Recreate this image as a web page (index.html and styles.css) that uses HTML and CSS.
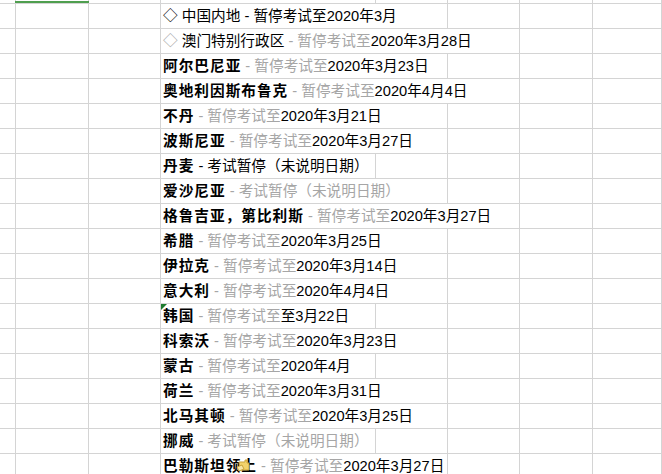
FILE: index.html
```html
<!DOCTYPE html>
<html lang="zh">
<head>
<meta charset="utf-8">
<link rel="stylesheet" href="styles.css">
</head>
<body>
<div class="sheet">
  <div class="row top">
    <div class="c"></div><div class="c"><div class="sel"></div></div><div class="c"></div><div class="c"></div><div class="c"></div><div class="c"></div><div class="c"></div><div class="c"></div>
  </div>
  <div class="row"><div class="c"></div><div class="c"></div><div class="c"></div><div class="c t"><span class="txt">◇ 中国内地 - 暂停考试至2020年3月</span></div><div class="c"></div><div class="c"></div><div class="c"></div><div class="c"></div></div>
  <div class="row"><div class="c"></div><div class="c"></div><div class="c"></div><div class="c t"><span class="txt"><span class="g">◇ </span>澳门特别行政区<span class="g"> - 暂停考试至</span>2020年3月28日</span></div><div class="c"></div><div class="c"></div><div class="c"></div><div class="c"></div></div>
  <div class="row"><div class="c"></div><div class="c"></div><div class="c"></div><div class="c t"><span class="txt"><b>阿尔巴尼亚</b><span class="g"> - 暂停考试至</span>2020年3月23日</span></div><div class="c"></div><div class="c"></div><div class="c"></div><div class="c"></div></div>
  <div class="row"><div class="c"></div><div class="c"></div><div class="c"></div><div class="c t"><span class="txt"><b>奥地利因斯布鲁克</b><span class="g"> - 暂停考试至</span>2020年4月4日</span></div><div class="c"></div><div class="c"></div><div class="c"></div><div class="c"></div></div>
  <div class="row"><div class="c"></div><div class="c"></div><div class="c"></div><div class="c t"><span class="txt"><b>不丹</b><span class="g"> - 暂停考试至</span>2020年3月21日</span></div><div class="c"></div><div class="c"></div><div class="c"></div><div class="c"></div></div>
  <div class="row"><div class="c"></div><div class="c"></div><div class="c"></div><div class="c t"><span class="txt"><b>波斯尼亚</b><span class="g"> - 暂停考试至</span>2020年3月27日</span></div><div class="c"></div><div class="c"></div><div class="c"></div><div class="c"></div></div>
  <div class="row"><div class="c"></div><div class="c"></div><div class="c"></div><div class="c t"><span class="txt"><b>丹麦</b> - 考试暂停（未说明日期）</span></div><div class="c"></div><div class="c"></div><div class="c"></div><div class="c"></div></div>
  <div class="row"><div class="c"></div><div class="c"></div><div class="c"></div><div class="c t"><span class="txt"><b>爱沙尼亚</b><span class="g"> - 考试暂停（未说明日期）</span></span></div><div class="c"></div><div class="c"></div><div class="c"></div><div class="c"></div></div>
  <div class="row"><div class="c"></div><div class="c"></div><div class="c"></div><div class="c t"><span class="txt"><b>格鲁吉亚，第比利斯</b><span class="g"> - 暂停考试至</span>2020年3月27日</span></div><div class="c"></div><div class="c"></div><div class="c"></div><div class="c"></div></div>
  <div class="row"><div class="c"></div><div class="c"></div><div class="c"></div><div class="c t"><span class="txt"><b>希腊</b><span class="g"> - 暂停考试至</span>2020年3月25日</span></div><div class="c"></div><div class="c"></div><div class="c"></div><div class="c"></div></div>
  <div class="row"><div class="c"></div><div class="c"></div><div class="c"></div><div class="c t"><span class="txt"><b>伊拉克</b><span class="g"> - 暂停考试至</span>2020年3月14日</span></div><div class="c"></div><div class="c"></div><div class="c"></div><div class="c"></div></div>
  <div class="row"><div class="c"></div><div class="c"></div><div class="c"></div><div class="c t"><span class="txt"><b>意大利</b><span class="g"> - 暂停考试至</span>2020年4月4日</span></div><div class="c"></div><div class="c"></div><div class="c"></div><div class="c"></div></div>
  <div class="row"><div class="c"></div><div class="c"></div><div class="c"></div><div class="c t flag"><span class="txt"><b>韩国</b><span class="g"> - 暂停考试至</span>至3月22日</span></div><div class="c"></div><div class="c"></div><div class="c"></div><div class="c"></div></div>
  <div class="row"><div class="c"></div><div class="c"></div><div class="c"></div><div class="c t"><span class="txt"><b>科索沃</b><span class="g"> - 暂停考试至</span>2020年3月23日</span></div><div class="c"></div><div class="c"></div><div class="c"></div><div class="c"></div></div>
  <div class="row"><div class="c"></div><div class="c"></div><div class="c"></div><div class="c t"><span class="txt"><b>蒙古</b><span class="g"> - 暂停考试至</span>2020年4月</span></div><div class="c"></div><div class="c"></div><div class="c"></div><div class="c"></div></div>
  <div class="row"><div class="c"></div><div class="c"></div><div class="c"></div><div class="c t"><span class="txt"><b>荷兰</b><span class="g"> - 暂停考试至</span>2020年3月31日</span></div><div class="c"></div><div class="c"></div><div class="c"></div><div class="c"></div></div>
  <div class="row"><div class="c"></div><div class="c"></div><div class="c"></div><div class="c t"><span class="txt"><b>北马其顿</b><span class="g"> - 暂停考试至</span>2020年3月25日</span></div><div class="c"></div><div class="c"></div><div class="c"></div><div class="c"></div></div>
  <div class="row"><div class="c"></div><div class="c"></div><div class="c"></div><div class="c t"><span class="txt"><b>挪威</b><span class="g"> - 考试暂停（未说明日期）</span></span></div><div class="c"></div><div class="c"></div><div class="c"></div><div class="c"></div></div>
  <div class="row"><div class="c"></div><div class="c"></div><div class="c"></div><div class="c t"><span class="txt"><b>巴勒斯坦领土</b><span class="g"> - 暂停考试至</span>2020年3月27日</span><svg class="cursor" width="16" height="16" viewBox="0 0 16 16"><path d="M3 4 L9 4 L9 2 L11 2 L11 5 L13 5 L13 12 L4 12 Z" fill="#f2d36b" stroke="#c9a43a" stroke-width="1"/><path d="M1 9 L6 7 L8 11 L3 13 Z" fill="#f7e6a8" stroke="#c9a43a" stroke-width="1"/></svg></div><div class="c"></div><div class="c"></div><div class="c"></div><div class="c"></div></div>
</div>
</body>
</html>
```

FILE: styles.css
```css
html, body {
  margin: 0;
  padding: 0;
  background: #ffffff;
}
body {
  font-family: "Liberation Sans", "Noto Sans CJK SC", sans-serif;
  font-size: 14.67px;
  color: #000;
  overflow: hidden;
  width: 662px;
  height: 474px;
}
.sheet {
  width: 662px;
  overflow: hidden;
}
.row {
  display: grid;
  grid-template-columns: 16px 73px 72px 215px 72px 72px 73px 69px;
  height: 25px;
}
.row.top {
  height: 4px;
}
.c {
  box-sizing: border-box;
  border-right: 1px solid #d4d4d4;
  border-bottom: 1px solid #d4d4d4;
  min-width: 0;
}
.sel {
  height: 2px;
  margin-top: 1px;
  margin-left: -1px;
  margin-right: -1px;
  background: #4f9f4f;
}
.t {
  position: relative;
  white-space: nowrap;
  padding-left: 2px;
  overflow: visible;
}
.txt {
  position: relative;
  z-index: 2;
  display: inline-block;
  height: 24px;
  line-height: 24px;
  background: #fff;
  padding-right: 1px;
}
.txt b {
  font-weight: bold;
  letter-spacing: 1px;
}
.g {
  color: #a6a6a6;
}
.flag::before {
  content: "";
  position: absolute;
  left: 0;
  top: 0;
  width: 0;
  height: 0;
  border-top: 6px solid #1e7b2e;
  border-right: 6px solid transparent;
  z-index: 3;
}
.cursor {
  position: absolute;
  left: 75px;
  top: 4px;
  z-index: 4;
}
```
